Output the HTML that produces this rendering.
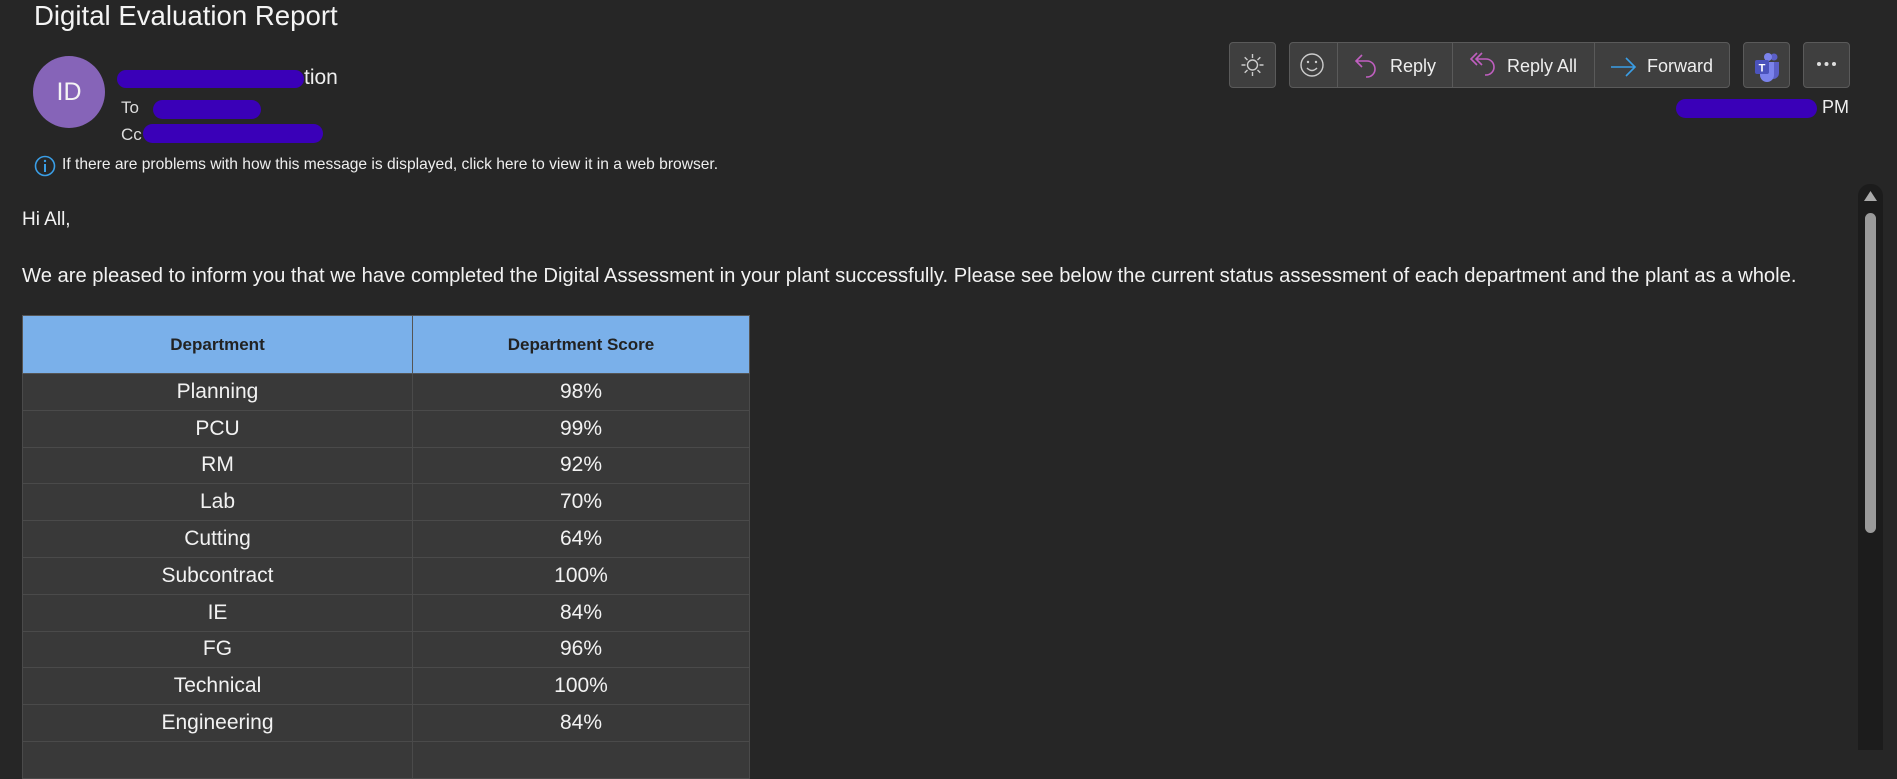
<!DOCTYPE html>
<html><head><meta charset="utf-8"><style>
body{margin:0;width:1897px;height:750px;background:#262626;color:#fff;font-family:"Liberation Sans",sans-serif;overflow:hidden;position:relative}
.a{position:absolute}
.btn{position:absolute;top:42px;height:46px;background:#3f3f3f;border:1px solid #5a5a5a;border-radius:4px;box-sizing:border-box}
.red{position:absolute;background:#3a00b8;border-radius:10px}
.sep{position:absolute;top:43px;width:1px;height:44px;background:#5a5a5a}
table{position:absolute;left:22px;top:315px;border-collapse:collapse;width:728px}
td,th{border:1px solid #4a4a4a;text-align:center;font-size:21px;height:35.8px;padding:0;background:#393939;color:#f2f2f2}
th{background:#7ab0ea;color:#222;font-size:17px;height:57px;border-color:#555}
.bt{font-size:18px;color:#eee;position:absolute;top:56px}
</style></head><body>
<div class="a" style="left:34px;top:0;font-size:27.6px;color:#f4f4f4">Digital Evaluation Report</div>
<div class="a" style="left:33px;top:56px;width:72px;height:72px;border-radius:50%;background:#8664b8;color:#f4f4f4;font-size:25px;text-align:center;line-height:72px">ID</div>
<div class="a" style="left:304px;top:66px;font-size:21px;color:#eee">tion</div>
<div class="red" style="left:117px;top:70px;width:187px;height:18px"></div>
<div class="a" style="left:121px;top:98px;font-size:17px;color:#ddd">To</div>
<div class="red" style="left:153px;top:100px;width:108px;height:19px"></div>
<div class="a" style="left:121px;top:125px;font-size:17px;color:#ddd">Cc</div>
<div class="red" style="left:143px;top:124px;width:180px;height:19px"></div>
<svg class="a" style="left:34px;top:155px" width="22" height="22"><circle cx="11" cy="11" r="9.5" fill="none" stroke="#3a9ee6" stroke-width="1.6"/><rect x="10" y="9" width="2" height="8" fill="#3a9ee6"/><circle cx="11" cy="6" r="1.2" fill="#3a9ee6"/></svg>
<div class="a" style="left:62px;top:156px;font-size:15.6px;color:#eee">If there are problems with how this message is displayed, click here to view it in a web browser.</div>

<div class="btn" style="left:1229px;width:47px"><svg width="45" height="44"><g stroke="#ccc" stroke-width="1.4" fill="none"><circle cx="22.5" cy="22" r="5"/><path d="M22.5 11v4M22.5 29v4M11.5 22h4M29.5 22h4M14.7 14.2l2.8 2.8M27.5 27l2.8 2.8M14.7 29.8l2.8-2.8M27.5 17l2.8-2.8"/></g></svg></div>
<div class="btn" style="left:1289px;width:441px"></div>
<div class="sep" style="left:1337px"></div>
<div class="sep" style="left:1452px"></div>
<div class="sep" style="left:1594px"></div>
<svg class="a" style="left:1298px;top:50px" width="30" height="30"><g stroke="#ccc" stroke-width="1.4" fill="none"><circle cx="14" cy="15" r="11"/><path d="M9 18q5 5 10 0"/></g><circle cx="10" cy="12" r="1.2" fill="#ccc"/><circle cx="18" cy="12" r="1.2" fill="#ccc"/></svg>
<svg class="a" style="left:1353px;top:52px" width="30" height="30"><path d="M9 3L3 9l6 6M3 9h11a8 8 0 0 1 0 16h-1" stroke="#c05fc0" stroke-width="1.6" fill="none"/></svg>
<div class="bt" style="left:1390px">Reply</div>
<svg class="a" style="left:1469px;top:52px" width="32" height="30"><path d="M8 1L2 7l6 6M13 1L7 7l6 6M7 7h10a8 8 0 0 1 0 16h-1" stroke="#c05fc0" stroke-width="1.6" fill="none"/></svg>
<div class="bt" style="left:1507px">Reply All</div>
<svg class="a" style="left:1609px;top:55px" width="30" height="24"><path d="M2 12h24M17 3l9 9-9 9" stroke="#3a9ee6" stroke-width="1.6" fill="none"/></svg>
<div class="bt" style="left:1647px">Forward</div>
<div class="btn" style="left:1743px;width:47px"><svg width="46" height="44"><circle cx="30" cy="14" r="3.5" fill="#5b5fc7"/><path d="M21 19h14v11a6 6 0 0 1-12 0z" fill="#5b5fc7"/><circle cx="24" cy="14" r="4" fill="#7b83eb"/><path d="M16 19h14v13a7 7 0 0 1-14 0z" fill="#7b83eb"/><rect x="11" y="17" width="14" height="14" rx="2" fill="#4b53bc"/><text x="18" y="28.5" font-size="11" font-weight="bold" fill="#fff" text-anchor="middle" font-family="Liberation Sans">T</text></svg></div>
<div class="btn" style="left:1803px;width:47px"><svg width="45" height="44"><circle cx="15" cy="21" r="2" fill="#ddd"/><circle cx="22.5" cy="21" r="2" fill="#ddd"/><circle cx="30" cy="21" r="2" fill="#ddd"/></svg></div>
<div class="red" style="left:1676px;top:99px;width:141px;height:19px"></div>
<div class="a" style="left:1822px;top:97px;font-size:18px;color:#eee">PM</div>

<div class="a" style="left:1858px;top:184px;width:25px;height:566px;background:#1c1c1c;border-radius:12px 12px 0 0"></div>
<svg class="a" style="left:1863px;top:190px" width="15" height="12"><path d="M7.5 1L14 11H1z" fill="#aaa"/></svg>
<div class="a" style="left:1865px;top:213px;width:11px;height:320px;background:#9a9a9a;border-radius:6px"></div>

<div class="a" style="left:22px;top:209px;font-size:19px;color:#f2f2f2">Hi All,</div>
<div class="a" style="left:22px;top:265px;font-size:20.2px;color:#f2f2f2;white-space:nowrap">We are pleased to inform you that we have completed the Digital Assessment in your plant successfully. Please see below the current status assessment of each department and the plant as a whole.</div>

<table>
<tr><th style="width:389px">Department</th><th>Department Score</th></tr>
<tr><td>Planning</td><td>98%</td></tr>
<tr><td>PCU</td><td>99%</td></tr>
<tr><td>RM</td><td>92%</td></tr>
<tr><td>Lab</td><td>70%</td></tr>
<tr><td>Cutting</td><td>64%</td></tr>
<tr><td>Subcontract</td><td>100%</td></tr>
<tr><td>IE</td><td>84%</td></tr>
<tr><td>FG</td><td>96%</td></tr>
<tr><td>Technical</td><td>100%</td></tr>
<tr><td>Engineering</td><td>84%</td></tr>
<tr><td>&nbsp;</td><td>&nbsp;</td></tr>
</table>
</body></html>
